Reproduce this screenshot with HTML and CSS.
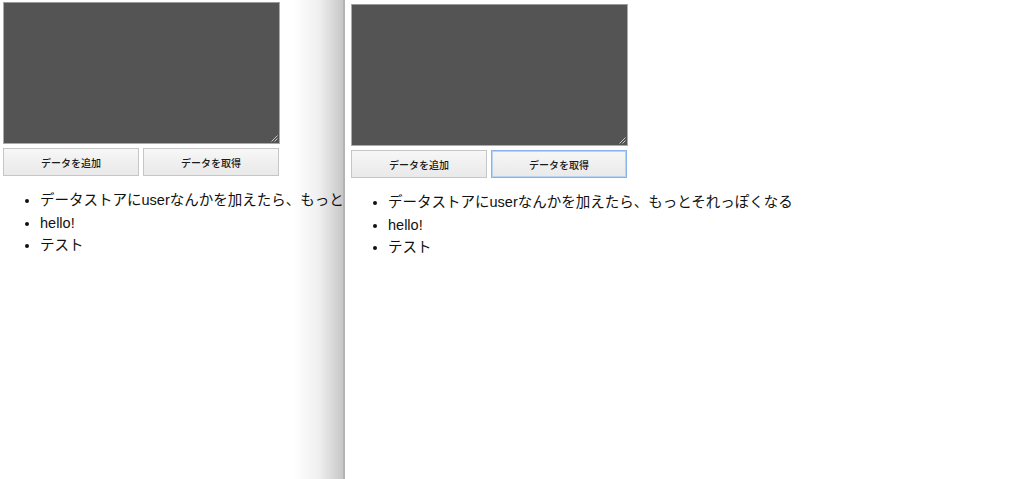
FILE: index.html
```html
<!DOCTYPE html>
<html lang="ja">
<head>
<meta charset="utf-8">
<title>データストア</title>
<link rel="stylesheet" href="styles.css">
</head>
<body>
<div class="pane pane-left">
  <div class="content content-left">
    <div class="editor">
      <svg class="grip" width="7" height="7" viewBox="0 0 7 7"><path d="M6.5 0.5 L0.5 6.5 M6.5 3.5 L3.5 6.5" stroke="#c8c8c8" stroke-width="1"/></svg>
    </div>
    <div class="actions">
      <button class="btn">データを追加</button>
      <button class="btn">データを取得</button>
    </div>
    <ul class="items">
      <li>データストアにuserなんかを加えたら、もっとそれっぽくなる</li>
      <li>hello!</li>
      <li>テスト</li>
    </ul>
  </div>
  <div class="shade"></div>
</div>
<div class="pane pane-right">
  <div class="content content-right">
    <div class="editor">
      <svg class="grip" width="7" height="7" viewBox="0 0 7 7"><path d="M6.5 0.5 L0.5 6.5 M6.5 3.5 L3.5 6.5" stroke="#c8c8c8" stroke-width="1"/></svg>
    </div>
    <div class="actions">
      <button class="btn">データを追加</button>
      <button class="btn btn-focus">データを取得</button>
    </div>
    <ul class="items">
      <li>データストアにuserなんかを加えたら、もっとそれっぽくなる</li>
      <li>hello!</li>
      <li>テスト</li>
    </ul>
  </div>
</div>
</body>
</html>
```
FILE: styles.css
```css
html, body {
  margin: 0;
  padding: 0;
  background: #fff;
}
body {
  display: flex;
  height: 479px;
  overflow: hidden;
  font-family: "Liberation Sans", "Noto Sans CJK JP", sans-serif;
  font-size: 14.5px;
  color: #111;
}
.pane {
  height: 100%;
  overflow: hidden;
}
.pane-left {
  position: relative;
  width: 343px;
  flex: none;
}
.pane-right {
  flex: 1;
  border-left: 2px solid #b3b3b3;
}
.content {
  width: 900px;
}
.content-left {
  padding: 2px 0 0 3px;
}
.content-right {
  padding: 4px 0 0 6px;
}
.editor {
  position: relative;
  box-sizing: border-box;
  width: 277px;
  height: 142px;
  background: #545454;
  border: 1px solid #ababab;
  border-top-color: #9a9a9a;
}
.grip {
  position: absolute;
  right: 1px;
  bottom: 1px;
  display: block;
}
.actions {
  display: flex;
  gap: 4px;
  margin-top: 4px;
}
.btn {
  box-sizing: border-box;
  width: 136px;
  height: 28px;
  margin: 0;
  padding: 0;
  font-family: "Noto Sans CJK JP", "Liberation Sans", sans-serif;
  font-size: 10px;
  font-weight: 500;
  color: #1a1a1a;
  background: linear-gradient(#f7f7f7, #e9e9e9);
  border: 1px solid #c6c6c6;
  border-radius: 0;
}
.btn-focus {
  border-color: #86b3ec;
  box-shadow: inset 0 0 0 1px #b9d3f3;
}
.items {
  margin: 13px 0 0 0;
  padding-left: 37px;
  line-height: 22.5px;
  white-space: nowrap;
}
.shade {
  position: absolute;
  top: 0;
  right: 0;
  bottom: 0;
  width: 50px;
  background: linear-gradient(to right, rgba(0,0,0,0), rgba(0,0,0,0.06) 50%, rgba(0,0,0,0.22));
  pointer-events: none;
}
```
